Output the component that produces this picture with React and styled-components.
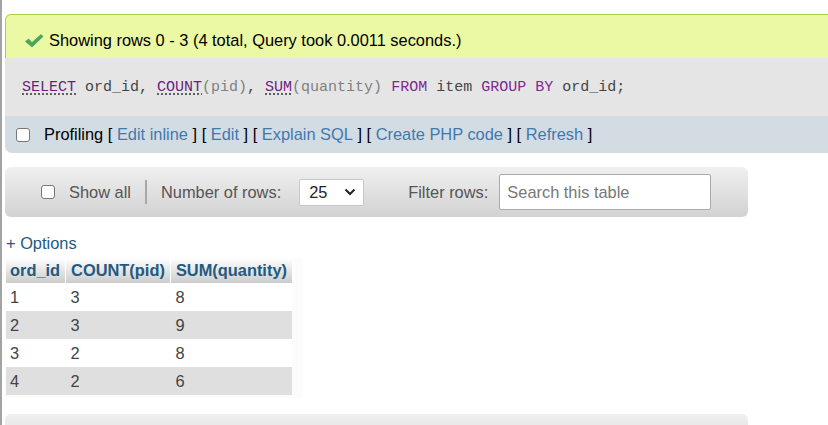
import React from "react";
import styled, { createGlobalStyle } from "styled-components";

const GlobalStyle = createGlobalStyle`
  body {
    margin: 0;
    background: #fff;
    font-family: "Liberation Sans", Arial, sans-serif;
    color: #444;
  }
`;

const Page = styled.div`
  min-height: 425px;
  border-left: 2px solid #a3a3a3;
  padding: 14px 0 0 3px;
  overflow: hidden;
  box-sizing: border-box;
`;

const ResultBox = styled.div`
  margin-right: -20px;
`;

const Success = styled.div`
  display: flex;
  align-items: center;
  gap: 5px;
  height: 44px;
  box-sizing: border-box;
  padding: 7px 0 0 18px;
  background: #ebf8a4;
  border: 1px solid #a2d246;
  border-bottom: none;
  border-radius: 6px 0 0 0;
  font-size: 16.4px;
  color: #000;
`;

const SqlBox = styled.div`
  display: flex;
  align-items: center;
  height: 58px;
  padding-left: 17px;
  background: #e5e5e5;
  font-family: "Liberation Mono", "DejaVu Sans Mono", monospace;
  font-size: 15px;
  color: #444;
`;

const Kw = styled.span`
  color: ${(p) => (p.$fn ? "#6c1d7e" : "#7d2a8f")};
  text-decoration: ${(p) => (p.$fn ? "underline dotted #333" : "none")};
  text-underline-offset: 3px;
`;

const Paren = styled.span`
  color: #808080;
`;

const Profiling = styled.div`
  display: flex;
  align-items: center;
  height: 37px;
  padding-left: 11px;
  background: #d3dce3;
  border-radius: 0 0 0 7px;
  font-size: 16.4px;
  color: #000;
  white-space: pre;
`;

const Box = styled.span`
  display: inline-block;
  width: 12px;
  height: 12px;
  border: 1px solid #767676;
  border-radius: 3px;
  background: #fff;
  margin-right: ${(p) => p.$gap || 14}px;
`;

const Link = styled.a`
  color: #3f79ae;
  text-decoration: none;
`;

const NavBar = styled.div`
  display: flex;
  align-items: center;
  width: 743px;
  height: 50px;
  margin-top: ${(p) => p.$top}px;
  box-sizing: border-box;
  padding-left: 36px;
  border-radius: 6px;
  background: linear-gradient(#f0f0f0, #d2d2d2);
  font-size: 16.4px;
  color: #555;
`;

const Sep = styled.span`
  width: 2px;
  height: 24px;
  background: #a8a8a8;
  margin: 0 14px 0 14px;
`;

const Select = styled.div`
  display: flex;
  align-items: center;
  justify-content: space-between;
  width: 65px;
  height: 27px;
  box-sizing: border-box;
  margin-left: 18px;
  padding: 0 7px 0 9px;
  background: #fff;
  border: 1px solid #c8c8c8;
  border-radius: 2px;
  color: #222;
`;

const Label = styled.span`
  margin-left: ${(p) => p.$left || 0}px;
`;

const Search = styled.div`
  width: 212px;
  height: 36px;
  box-sizing: border-box;
  margin-left: 11px;
  padding-left: 7px;
  display: flex;
  align-items: center;
  background: #fff;
  border: 1px solid #aaa;
  border-radius: 2px;
  color: #777;
`;

const Options = styled.a`
  display: block;
  margin: 17px 0 5px 1px;
  font-size: 16.4px;
  color: #235a81;
`;

const TableWrap = styled.div`
  width: fit-content;
  padding: 0 10px 3px 1px;
  background: #fcfcfd;
`;

const Table = styled.table`
  border-collapse: collapse;
  font-size: 16.4px;
`;

const Th = styled.th`
  height: 25px;
  padding: 0 5px 0 ${(p) => (p.$first ? 4 : 5)}px;
  text-align: left;
  color: #235a81;
  background: linear-gradient(#fff, #cccccc);
  border-right: 1px solid #fff;
  white-space: nowrap;
`;

const Td = styled.td`
  height: 28px;
  padding: 0 5px 0 ${(p) => (p.$first ? 4 : 5)}px;
  color: #444;
  background: ${(p) => (p.$odd ? "#dfdfdf" : "#fff")};
`;

const Check = () => (
  <svg width="20" height="15" viewBox="0 0 20 15">
    <path d="M1.5 8.5 L4.5 6 L8 9.5 L17 1.5 L19 3.5 L8 14 Z" fill="#4aa85c" stroke="#3a8f4c" strokeWidth="0.6" />
  </svg>
);

const Chevron = () => (
  <svg width="12" height="8" viewBox="0 0 12 8">
    <path d="M1.5 1.5 L6 6 L10.5 1.5" fill="none" stroke="#222" strokeWidth="2" />
  </svg>
);

const rows = [
  [1, 3, 8],
  [2, 3, 9],
  [3, 2, 8],
  [4, 2, 6],
];

export default function App() {
  return (
    <>
      <GlobalStyle />
      <Page>
        <ResultBox>
          <Success>
            <Check />
            Showing rows 0 - 3 (4 total, Query took 0.0011 seconds.)
          </Success>
          <SqlBox>
            <span>
              <Kw $fn>SELECT</Kw> ord_id, <Kw $fn>COUNT</Kw><Paren>(pid)</Paren>, <Kw $fn>SUM</Kw>
              <Paren>(quantity)</Paren> <Kw>FROM</Kw> item <Kw>GROUP BY</Kw> ord_id;
            </span>
          </SqlBox>
          <Profiling>
            <Box $gap={14} />
            Profiling [ <Link>Edit inline</Link> ] [ <Link>Edit</Link> ] [ <Link>Explain SQL</Link> ] [{" "}
            <Link>Create PHP code</Link> ] [ <Link>Refresh</Link> ]
          </Profiling>
        </ResultBox>

        <NavBar $top={14}>
          <Box $gap={14} />
          <Label>Show all</Label>
          <Sep />
          <Label>Number of rows:</Label>
          <Select>
            25
            <Chevron />
          </Select>
          <Label $left={44}>Filter rows:</Label>
          <Search>Search this table</Search>
        </NavBar>

        <Options>+ Options</Options>
        <TableWrap>
          <Table>
            <thead>
              <tr>
                <Th $first>ord_id</Th>
                <Th>COUNT(pid)</Th>
                <Th>SUM(quantity)</Th>
              </tr>
            </thead>
            <tbody>
              {rows.map((r, i) => (
                <tr key={i}>
                  {r.map((v, j) => (
                    <Td key={j} $first={j === 0} $odd={i % 2 === 1}>
                      {v}
                    </Td>
                  ))}
                </tr>
              ))}
            </tbody>
          </Table>
        </TableWrap>

        <NavBar $top={16}>
          <Box $gap={14} />
        </NavBar>
      </Page>
    </>
  );
}
